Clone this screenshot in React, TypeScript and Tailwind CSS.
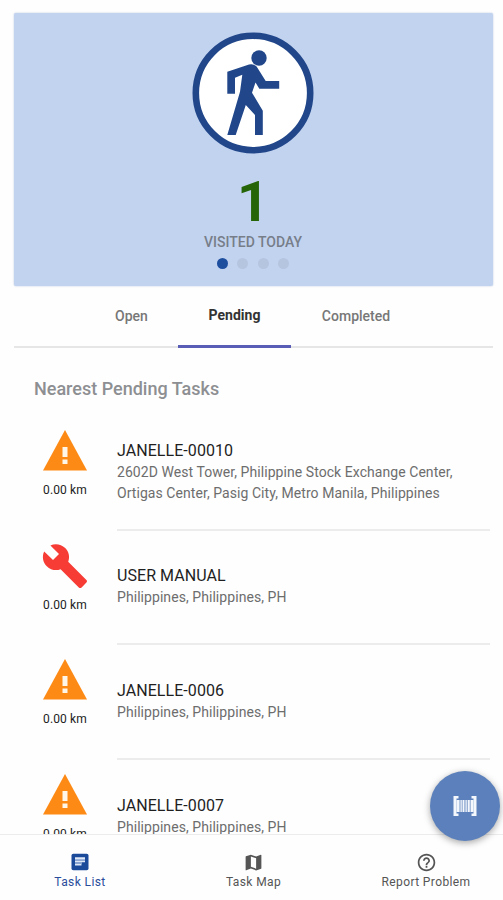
import React from "react";
import { MdBuild, MdMap, MdHelpOutline } from "react-icons/md";

type Task = { kind: "warning" | "repair"; title: string; lines: string[]; distance: string };

const tasks: Task[] = [
  {
    kind: "warning",
    title: "JANELLE-00010",
    lines: [
      "2602D West Tower, Philippine Stock Exchange Center,",
      "Ortigas Center, Pasig City, Metro Manila, Philippines",
    ],
    distance: "0.00 km",
  },
  { kind: "repair", title: "USER MANUAL", lines: ["Philippines, Philippines, PH"], distance: "0.00 km" },
  { kind: "warning", title: "JANELLE-0006", lines: ["Philippines, Philippines, PH"], distance: "0.00 km" },
  { kind: "warning", title: "JANELLE-0007", lines: ["Philippines, Philippines, PH"], distance: "0.00 km" },
];

function WalkBadge() {
  return (
    <svg viewBox="192 32 122 122" className="block h-[122px] w-[122px] shrink-0">
      <circle cx="253" cy="93" r="57.2" fill="#fff" stroke="#21478a" strokeWidth="6.6" />
      <circle cx="259" cy="58" r="7.7" fill="#21478a" />
      <path
        fill="#21478a"
        d="M227.3 71.7L249 64.6Q253.500 63.500 256.600 66.500L265.700 81H279.200V88.700H259.300L255.500 82.500L252 92.700L262.800 110.700V135H255V115L245.800 105L235.700 135H227.300L240 91.700L242.300 74.700L235 77.700V93.700H227.300Z"
      />
    </svg>
  );
}

function WarningIcon() {
  return (
    <svg viewBox="0 0 48 48" className="block size-12 shrink-0">
      <path d="M24 3L46 43.500H2Z" fill="#fd8a15" />
      <path d="M21.500 20H26.500V30H21.500ZM21.500 32.500H26.500V37H21.500Z" fill="#fff6ea" />
    </svg>
  );
}

function ScanIcon() {
  return (
    <svg viewBox="0 0 24 22" className="block h-[22px] w-6" fill="#f4f7fc">
      <path d="M0.500 1H5.500V3.500H3.500V18.500H5.500V21H0.500ZM23.500 1H18.500V3.500H20.500V18.500H18.500V21H23.500Z" />
      <path d="M3.500 5H6.600V17H3.500ZM7.400 5H8.800V17H7.400ZM9.500 5H11.500V17H9.500ZM12.400 5H13.800V17H12.400ZM14.600 5H16.800V17H14.600ZM17.500 5H20.500V17H17.500Z" />
    </svg>
  );
}

function ListIcon() {
  return (
    <svg viewBox="0 0 18 18" className="block h-[18px] w-[18px]">
      <rect x="0.500" y="0.800" width="17" height="16.500" rx="1.800" fill="#1b4a9b" />
      <path d="M4 4.200H14V6H4ZM4 7.500H14V9.300H4ZM4 10.800H10.500V12.600H4Z" fill="#dfe8f7" />
      <path d="M4 6H14V7.500H4ZM4 9.300H11V10.800H4Z" fill="#9db5dc" />
    </svg>
  );
}

function TaskRow({ task, last }: { task: Task; last: boolean }) {
  return (
    <li className="flex h-[114.700px] shrink-0">
      <div className="flex w-[83px] shrink-0 flex-col items-start pt-[11px]">
        <div className="flex w-[62px] flex-col items-center">
          {task.kind === "warning" ? <WarningIcon /> : <MdBuild className="size-12 text-[#f63c35]" />}
          <span className="mt-2 text-[12px] leading-[14px] tracking-[0.150px] whitespace-nowrap text-[#222]">
            {task.distance}
          </span>
        </div>
      </div>
      <div
        className={
          last
            ? "flex flex-1 flex-col justify-center pb-[2.500px]"
            : "flex flex-1 flex-col justify-center border-b-2 border-[#ececec] pb-[0.500px]"
        }
      >
        <h3 className="text-[16px] leading-[22px] tracking-[0.060px] text-[#1f1f1f]">{task.title}</h3>
        {task.lines.map((line) => (
          <p key={line} className="text-[14px] leading-[21px] tracking-[0.060px] whitespace-nowrap text-[#6d6d6d]">
            {line}
          </p>
        ))}
      </div>
    </li>
  );
}

export default function App() {
  return (
    <div className="relative flex h-[900px] w-[503px] flex-col overflow-hidden bg-[#fefefe] font-['Roboto',sans-serif]">
      <main className="flex min-h-0 flex-1 flex-col overflow-hidden px-[13px] pt-[13px]">
        <section className="mr-[-3px] ml-px flex h-[273px] shrink-0 flex-col items-center rounded-[2px] bg-[#c2d3f0] pt-[19px] pr-px shadow-[0_0_2px_#b8c6df]">
          <WalkBadge />
          <strong className="mt-[19px] text-[56px] leading-[58px] font-bold text-[#256507]">1</strong>
          <span className="mt-[3px] text-[14px] leading-4 font-medium text-[#777e89]">VISITED TODAY</span>
          <div className="mt-2 flex gap-[9.500px]">
            <i className="size-[11px] rounded-full bg-[#1e4f9f]" />
            <i className="size-[11px] rounded-full bg-[#b5c5e0]" />
            <i className="size-[11px] rounded-full bg-[#b5c5e0]" />
            <i className="size-[11px] rounded-full bg-[#b5c5e0]" />
          </div>
        </section>

        <nav className="mr-[-3px] ml-px flex h-[62px] shrink-0 justify-center border-b-2 border-[#e6e6e6] pr-px text-[14px] font-medium text-[#777]">
          <button className="-mb-0.5 w-[93px] pb-[2px]">Open</button>
          <button className="-mb-0.5 w-[113px] border-b-[3px] border-[#5a5db5] font-bold text-[#333]">Pending</button>
          <button className="-mb-0.5 w-[130px] pb-[2px]">Completed</button>
        </nav>

        <h2 className="mt-[29px] ml-[21px] shrink-0 text-[18px] leading-6 font-medium text-[#8d8f92]">
          Nearest Pending Tasks
        </h2>
        <ul className="mt-[15px] ml-[21px] flex flex-col">
          {tasks.map((task, i) => (
            <TaskRow key={task.title} task={task} last={i === tasks.length - 1} />
          ))}
        </ul>
      </main>

      <footer className="flex h-[66px] shrink-0 border-t border-[#ececec] bg-[#fefefe] text-[12px] leading-[14px] tracking-[0.400px] text-[#555]">
        <a className="flex w-[160px] flex-col items-center pt-[18px] text-[#2a4d9b]">
          <ListIcon />
          <span className="mt-1">Task List</span>
        </a>
        <a className="flex w-[187px] flex-col items-center pt-[17px]">
          <MdMap className="size-[21px]" />
          <span className="mt-0.5">Task Map</span>
        </a>
        <a className="flex w-[156px] flex-col items-center pt-[17px] pl-[2px]">
          <MdHelpOutline className="size-[21px]" />
          <span className="mt-0.5">Report Problem</span>
        </a>
      </footer>

      <button className="absolute top-[771px] left-[430px] flex size-[70px] items-center justify-center rounded-full bg-[#5b80bb] shadow-[0_2px_7px_rgba(0,0,0,0.35)]">
        <ScanIcon />
      </button>
    </div>
  );
}
